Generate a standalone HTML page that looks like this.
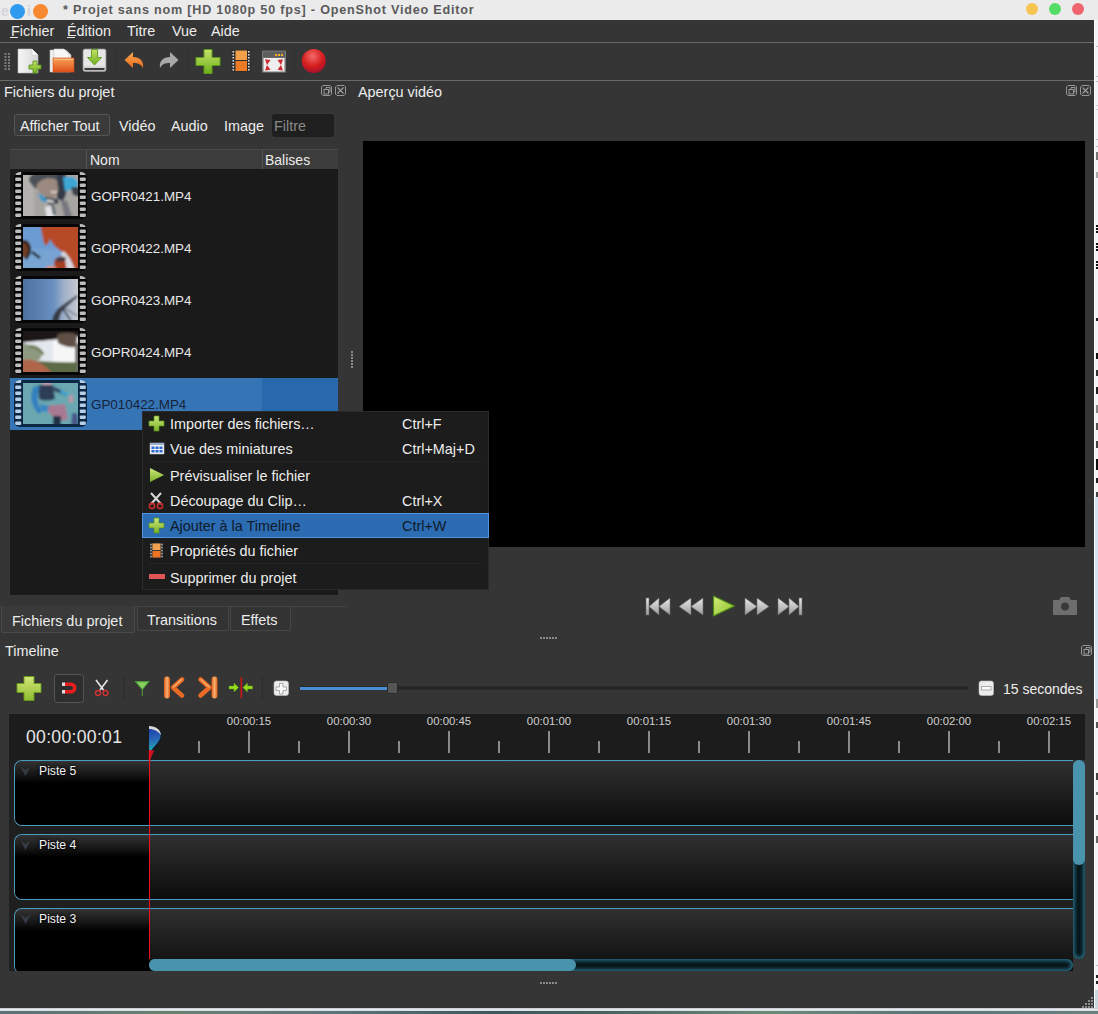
<!DOCTYPE html>
<html><head><meta charset="utf-8">
<style>
*{box-sizing:border-box}
html,body{margin:0;padding:0}
body{width:1098px;height:1014px;position:relative;overflow:hidden;background:#353535;font-family:"Liberation Sans",sans-serif;color:#ededed;font-size:14.4px;-webkit-font-smoothing:antialiased}
.a{position:absolute}
.t{position:absolute;white-space:nowrap;line-height:1}
</style></head><body>
<!-- title bar -->
<div class="a" style="left:0;top:0;width:1098px;height:20px;background:#ebebec"></div>
<div class="t" style="left:-3px;top:4px;font-size:14px;font-weight:bold;color:#d6d6d8">le</div><div class="t" style="left:27px;top:4px;font-size:14px;font-weight:bold;color:#d6d6d8">i</div>
<div class="a" style="left:10px;top:3.7px;width:15px;height:15px;border-radius:50%;background:#2f9bf0"></div>
<div class="a" style="left:33px;top:3.7px;width:15px;height:15px;border-radius:50%;background:#f78a30"></div>
<div class="t" style="left:63px;top:4px;font-weight:bold;font-size:12.6px;letter-spacing:0.8px;color:#5a5a5a">* Projet sans nom [HD 1080p 50 fps] - OpenShot Video Editor</div>
<div class="a" style="left:1026px;top:3px;width:12px;height:12px;border-radius:50%;background:#f6c453"></div>
<div class="a" style="left:1049px;top:3px;width:12px;height:12px;border-radius:50%;background:#55dd66"></div>
<div class="a" style="left:1072px;top:3px;width:12px;height:12px;border-radius:50%;background:#f0646e"></div>

<!-- right strip other window -->
<div class="a" style="left:1094px;top:20px;width:4px;height:990px;background:#f4f4f6"></div>
<div class="a" style="left:1094px;top:497px;width:4px;height:203px;background:#d6e2ef"></div>
<div class="a" style="left:1094px;top:990px;width:4px;height:18px;background:#c9d6de"></div>
<div class="a" style="left:1094px;top:20px;width:1px;height:990px;background:#ffffff"></div>
<div class="a" style="left:1096px;top:46px;width:2px;height:1px;background:#bbb"></div>
<div class="a" style="left:1096px;top:76px;width:2px;height:1px;background:#bbb"></div>
<div class="a" style="left:1096px;top:81px;width:2px;height:1px;background:#bbb"></div>
<div class="a" style="left:1096px;top:105px;width:2px;height:1px;background:#ccc"></div>
<div class="a" style="left:1096px;top:109px;width:2px;height:1px;background:#ccc"></div>
<div class="a" style="left:1096px;top:139px;width:2px;height:1px;background:#bbb"></div>
<div class="a" style="left:1096px;top:146px;width:2px;height:1px;background:#bbb"></div>
<div class="a" style="left:1096px;top:152px;width:2px;height:8px;background:#777"></div>
<div class="a" style="left:1096px;top:172px;width:2px;height:6px;background:#aaa"></div>
<div class="a" style="left:1096px;top:225px;width:2px;height:2px;background:#111"></div>
<div class="a" style="left:1096px;top:228px;width:2px;height:2px;background:#111"></div>
<div class="a" style="left:1096px;top:231px;width:2px;height:2px;background:#111"></div>
<div class="a" style="left:1096px;top:243px;width:2px;height:2px;background:#111"></div>
<div class="a" style="left:1096px;top:246px;width:2px;height:2px;background:#111"></div>
<div class="a" style="left:1096px;top:249px;width:2px;height:2px;background:#111"></div>
<div class="a" style="left:1096px;top:261px;width:2px;height:2px;background:#111"></div>
<div class="a" style="left:1096px;top:264px;width:2px;height:2px;background:#111"></div>
<div class="a" style="left:1096px;top:267px;width:2px;height:2px;background:#111"></div>
<div class="a" style="left:1096px;top:318px;width:2px;height:3px;background:#222"></div>
<div class="a" style="left:1096px;top:353px;width:2px;height:6px;background:#111"></div>
<div class="a" style="left:1096px;top:370px;width:2px;height:6px;background:#333"></div>
<div class="a" style="left:1096px;top:387px;width:2px;height:7px;background:#222"></div>
<div class="a" style="left:1096px;top:405px;width:2px;height:8px;background:#888"></div>
<div class="a" style="left:1096px;top:423px;width:2px;height:7px;background:#555"></div>
<div class="a" style="left:1096px;top:441px;width:2px;height:7px;background:#444"></div>
<div class="a" style="left:1096px;top:459px;width:2px;height:11px;background:#111"></div>
<div class="a" style="left:1096px;top:478px;width:2px;height:5px;background:#222"></div>
<div class="a" style="left:1096px;top:492px;width:2px;height:5px;background:#444"></div>
<div class="a" style="left:1096px;top:699px;width:2px;height:9px;background:#999"></div>
<div class="a" style="left:1096px;top:722px;width:2px;height:6px;background:#555"></div>
<div class="a" style="left:1096px;top:773px;width:2px;height:7px;background:#444"></div>
<div class="a" style="left:1096px;top:792px;width:2px;height:3px;background:#666"></div>
<div class="a" style="left:1096px;top:815px;width:2px;height:5px;background:#555"></div>
<div class="a" style="left:1096px;top:836px;width:2px;height:7px;background:#666"></div>
<div class="a" style="left:1096px;top:965px;width:2px;height:1px;background:#bbb"></div>
<div class="a" style="left:1096px;top:975px;width:2px;height:3px;background:#222"></div>
<div class="a" style="left:1096px;top:981px;width:2px;height:3px;background:#222"></div>
<!-- bottom desktop strip -->
<div class="a" style="left:0;top:1008px;width:1098px;height:3px;background:linear-gradient(180deg,#b8bcc0,#e6eaee 40%,#d8dde2)"></div>
<div class="a" style="left:0;top:1011px;width:1098px;height:3px;background:linear-gradient(90deg,#5c7078,#6a8070 15%,#5e747c 30%,#3e5860 45%,#4a6260 55%,#6a8a78 70%,#5a7478 85%,#6a8080)"></div>

<!-- menu -->
<div class="t" style="left:11px;top:24px">Fichier</div>
<div class="t" style="left:67px;top:24px">Édition</div>
<div class="t" style="left:127px;top:24px">Titre</div>
<div class="t" style="left:172px;top:24px">Vue</div>
<div class="t" style="left:211px;top:24px">Aide</div>
<div class="a" style="left:10px;top:37px;width:8px;height:1px;background:#e6e6e6"></div>
<div class="a" style="left:67px;top:37px;width:8px;height:1px;background:#e6e6e6"></div>
<div class="a" style="left:0;top:42px;width:1094px;height:1px;background:#6a6a6a"></div>
<div class="a" style="left:0;top:80px;width:1094px;height:1px;background:#6a6a6a"></div>


<!-- toolbar -->
<svg class="a" style="left:0;top:44px" width="340" height="36" viewBox="0 44 340 36">
<defs>
<linearGradient id="gp" x1="0" y1="0" x2="0" y2="1"><stop offset="0" stop-color="#c4e36a"/><stop offset="1" stop-color="#6fae1c"/></linearGradient>
<linearGradient id="pg" x1="0" y1="0" x2="1" y2="0"><stop offset="0" stop-color="#f6f6f6"/><stop offset="1" stop-color="#d8d8d8"/></linearGradient>
<linearGradient id="og" x1="0" y1="0" x2="0" y2="1"><stop offset="0" stop-color="#f7a35a"/><stop offset="1" stop-color="#e0501a"/></linearGradient>
<linearGradient id="orv" x1="0" y1="0" x2="0" y2="1"><stop offset="0" stop-color="#f4a84e"/><stop offset="1" stop-color="#ec6a1c"/></linearGradient>
<radialGradient id="rc" cx="0.45" cy="0.3" r="0.7"><stop offset="0" stop-color="#f46a6a"/><stop offset="0.6" stop-color="#d61e1e"/><stop offset="1" stop-color="#a8102a"/></radialGradient>
</defs>
<g fill="#7a7a7a">
<rect x="4.5" y="53" width="2" height="2"/><rect x="8" y="53" width="2" height="2"/>
<rect x="4.5" y="56" width="2" height="2"/><rect x="8" y="56" width="2" height="2"/>
<rect x="4.5" y="59" width="2" height="2"/><rect x="8" y="59" width="2" height="2"/>
<rect x="4.5" y="62" width="2" height="2"/><rect x="8" y="62" width="2" height="2"/>
<rect x="4.5" y="65" width="2" height="2"/><rect x="8" y="65" width="2" height="2"/>
<rect x="4.5" y="68" width="2" height="2"/><rect x="8" y="68" width="2" height="2"/>
</g>
<!-- new -->
<path d="M18 49 H32 L38 55 V73 H18 Z" fill="url(#pg)" stroke="#bdbdbd" stroke-width="0.6"/>
<path d="M32 49 V55 H38" fill="#fff" stroke="#c8c8c8" stroke-width="0.6"/>
<path d="M33 61 h4 v4 h4 v4 h-4 v4 h-4 v-4 h-4 v-4 h4 z" fill="url(#gp)" stroke="#4f8a14" stroke-width="0.8"/>
<!-- open -->
<path d="M50 50 H66 L71 55 V72 H50 Z" fill="#efefef" stroke="#c0c0c0" stroke-width="0.6"/>
<path d="M54 49 H64 L69 54 V60 H54 Z" fill="#f7f7f7" stroke="#c8c8c8" stroke-width="0.6"/>
<rect x="53" y="58" width="21" height="14" fill="url(#og)" stroke="#d44a14" stroke-width="0.6"/>
<rect x="54" y="59" width="19" height="1" fill="#f9c890" opacity="0.8"/>
<!-- save -->
<rect x="83" y="49" width="23" height="22.5" rx="2" fill="#d6d6d6" stroke="#9a9a9a" stroke-width="0.7"/>
<rect x="84" y="50" width="21" height="16" fill="#e6e6e6"/>
<rect x="84.5" y="68" width="20" height="2" fill="#3c3c3c"/>
<rect x="84.5" y="70" width="20" height="1" fill="#bdbdbd"/>
<path d="M91.5 49.5 h6 v8 h4 l-7 7.5 l-7 -7.5 h4 z" fill="url(#gp)" stroke="#5c9a1a" stroke-width="0.9"/>
<rect x="116" y="48" width="1" height="26" fill="#303030"/>
<!-- undo -->
<path d="M124.5 60 L133 52 V57 C140 57 144 61 143 68 C141 64 138 63 133 63 V68 Z" fill="url(#orv)"/>
<!-- redo -->
<path d="M178.5 60 L170 52 V57 C163 57 159 61 160 68 C162 64 165 63 170 63 V68 Z" fill="#a8a8a8"/>
<rect x="188" y="48" width="1" height="26" fill="#303030"/>
<!-- add -->
<path d="M204 49.5 h8 v8 h8 v8 h-8 v8 h-8 v-8 h-8 v-8 h8 z" fill="url(#gp)" stroke="#5d9c18" stroke-width="1"/>
<!-- film -->
<rect x="231.5" y="49.5" width="19" height="22.5" fill="#2c2c2c"/>
<g fill="#dcdcdc"><rect x="232.5" y="51" width="1.6" height="1.6"/><rect x="232.5" y="54" width="1.6" height="1.6"/><rect x="232.5" y="57" width="1.6" height="1.6"/><rect x="232.5" y="60" width="1.6" height="1.6"/><rect x="232.5" y="63" width="1.6" height="1.6"/><rect x="232.5" y="66" width="1.6" height="1.6"/><rect x="232.5" y="69" width="1.6" height="1.6"/>
<rect x="248" y="51" width="1.6" height="1.6"/><rect x="248" y="54" width="1.6" height="1.6"/><rect x="248" y="57" width="1.6" height="1.6"/><rect x="248" y="60" width="1.6" height="1.6"/><rect x="248" y="63" width="1.6" height="1.6"/><rect x="248" y="66" width="1.6" height="1.6"/><rect x="248" y="69" width="1.6" height="1.6"/></g>
<rect x="235.5" y="50.5" width="11.5" height="9.5" fill="#f0a048"/>
<rect x="235.5" y="61" width="11.5" height="10" fill="#ec7a24"/>
<!-- fullscreen -->
<rect x="262" y="50.6" width="24" height="22" fill="#7a7a7a"/>
<rect x="263" y="51.5" width="22" height="6" fill="#5e5e5e"/>
<g fill="#f2b01e"><rect x="275" y="54" width="2" height="2"/><rect x="278" y="54" width="2" height="2"/><rect x="281" y="54" width="2" height="2"/></g>
<rect x="263.5" y="58" width="21" height="13.5" fill="#eeeeee"/>
<g fill="#cc2a30"><path d="M265 59.3 L270.5 60 L267 65 Z"/><path d="M265 70.5 L270.5 69.8 L267 65 Z"/><path d="M283 59.3 L277.5 60 L281 65 Z"/><path d="M283 70.5 L277.5 69.8 L281 65 Z"/></g>
<rect x="294" y="48" width="1" height="26" fill="#303030"/>
<!-- record -->
<circle cx="313.8" cy="61" r="12" fill="url(#rc)"/>
</svg>

<!-- project files dock -->
<div class="t" style="left:4px;top:85px">Fichiers du projet</div>
<div class="a" style="left:14px;top:114px;width:96px;height:22px;border:1px solid #555;border-radius:3px;background:#3a3a3a"></div>
<div class="t" style="left:20px;top:119px">Afficher Tout</div>
<div class="t" style="left:119px;top:119px">Vidéo</div>
<div class="t" style="left:171px;top:119px">Audio</div>
<div class="t" style="left:224px;top:119px">Image</div>
<div class="a" style="left:272px;top:114px;width:62px;height:23px;border-radius:3px;background:#1f1f1f"></div>
<div class="t" style="left:274px;top:119px;color:#8a8a8a">Filtre</div>

<div class="a" style="left:10px;top:149px;width:328px;height:446px;background:#1a1a1a"></div>
<div class="a" style="left:10px;top:149px;width:328px;height:20px;background:#3c3c3c;border-top:1px solid #4a4a4a"></div>
<div class="a" style="left:86px;top:149px;width:1px;height:20px;background:#555"></div>
<div class="a" style="left:262px;top:149px;width:1px;height:20px;background:#555"></div>
<div class="t" style="left:90px;top:153px;font-size:14px">Nom</div>
<div class="t" style="left:265px;top:153px;font-size:14px">Balises</div>

<div class="a" style="left:10px;top:378px;width:328px;height:52px;background:#3675b5"></div>
<div class="a" style="left:262px;top:378px;width:76px;height:52px;background:#2868ad"></div>
<svg class="a" style="left:14px;top:172px" width="73" height="47" viewBox="0 0 73 47">
<defs><clipPath id="fc0"><rect x="0" y="0" width="73" height="47" rx="6"/></clipPath><clipPath id="ic0"><rect x="9" y="3" width="55" height="41"/></clipPath><filter id="bl0" x="-20%" y="-20%" width="140%" height="140%"><feGaussianBlur stdDeviation="0.9"/></filter></defs>
<g clip-path="url(#fc0)"><rect width="73" height="47" fill="#060606"/><rect x="1.2" y="-0.5" width="6" height="3.4" rx="1" fill="#bdbdbd"/><rect x="65.8" y="-0.5" width="6" height="3.4" rx="1" fill="#bdbdbd"/><rect x="1.2" y="5.5" width="6" height="3.4" rx="1" fill="#bdbdbd"/><rect x="65.8" y="5.5" width="6" height="3.4" rx="1" fill="#bdbdbd"/><rect x="1.2" y="11.5" width="6" height="3.4" rx="1" fill="#bdbdbd"/><rect x="65.8" y="11.5" width="6" height="3.4" rx="1" fill="#bdbdbd"/><rect x="1.2" y="17.5" width="6" height="3.4" rx="1" fill="#bdbdbd"/><rect x="65.8" y="17.5" width="6" height="3.4" rx="1" fill="#bdbdbd"/><rect x="1.2" y="23.5" width="6" height="3.4" rx="1" fill="#bdbdbd"/><rect x="65.8" y="23.5" width="6" height="3.4" rx="1" fill="#bdbdbd"/><rect x="1.2" y="29.5" width="6" height="3.4" rx="1" fill="#bdbdbd"/><rect x="65.8" y="29.5" width="6" height="3.4" rx="1" fill="#bdbdbd"/><rect x="1.2" y="35.5" width="6" height="3.4" rx="1" fill="#bdbdbd"/><rect x="65.8" y="35.5" width="6" height="3.4" rx="1" fill="#bdbdbd"/><rect x="1.2" y="41.5" width="6" height="3.4" rx="1" fill="#bdbdbd"/><rect x="65.8" y="41.5" width="6" height="3.4" rx="1" fill="#bdbdbd"/></g>
<g clip-path="url(#ic0)"><g transform="translate(9 3)" filter="url(#bl0)"><rect x="-3" y="-3" width="61" height="47" fill="#a7a5a2"/>
<rect x="-3" y="-3" width="14" height="47" fill="#b4b2ae"/>
<path d="M6 6 C6 -2 14 -3 22 -2 L36 -2 L38 6 C30 4 20 6 12 14 Z" fill="#4c4f56"/>
<path d="M34 -2 L42 -2 C46 6 44 20 40 26 L34 24 Z" fill="#343a48"/>
<path d="M13 12 C16 4 24 2 32 4 C36 10 36 18 32 22 C26 24 18 22 13 12 Z" fill="#9c8a80"/>
<path d="M28 16 C30 18 32 18 34 16" stroke="#f0e8e0" stroke-width="1.2" fill="none"/>
<path d="M40 2 L50 2 L56 8 L52 14 L42 16 Z" fill="#3ca8d6"/>
<path d="M48 12 L58 12 L58 22 L50 20 Z" fill="#3c414c"/>
<path d="M15 18 L22 22 L26 28 L18 26 Z" fill="#3a98c8"/>
<path d="M22 22 L34 24 L36 28 L26 30 Z" fill="#2c3444"/>
<path d="M24 24 L32 26 L30 28 L24 27 Z" fill="#d8d4d0"/>
<path d="M38 26 L44 26 L50 44 L42 44 Z" fill="#777780"/>
<path d="M22 32 L30 30 L32 44 L24 44 Z" fill="#e2e2e6"/>
<path d="M28 30 L31 30 L33 40 L30 40 Z" fill="#5a6a6a"/></g></g>
</svg>
<div class="t" style="left:91px;top:190px;font-size:13.4px;color:#e8e8e8">GOPR0421.MP4</div>
<svg class="a" style="left:14px;top:224px" width="73" height="47" viewBox="0 0 73 47">
<defs><clipPath id="fc1"><rect x="0" y="0" width="73" height="47" rx="6"/></clipPath><clipPath id="ic1"><rect x="9" y="3" width="55" height="41"/></clipPath><filter id="bl1" x="-20%" y="-20%" width="140%" height="140%"><feGaussianBlur stdDeviation="0.9"/></filter></defs>
<g clip-path="url(#fc1)"><rect width="73" height="47" fill="#060606"/><rect x="1.2" y="-0.5" width="6" height="3.4" rx="1" fill="#bdbdbd"/><rect x="65.8" y="-0.5" width="6" height="3.4" rx="1" fill="#bdbdbd"/><rect x="1.2" y="5.5" width="6" height="3.4" rx="1" fill="#bdbdbd"/><rect x="65.8" y="5.5" width="6" height="3.4" rx="1" fill="#bdbdbd"/><rect x="1.2" y="11.5" width="6" height="3.4" rx="1" fill="#bdbdbd"/><rect x="65.8" y="11.5" width="6" height="3.4" rx="1" fill="#bdbdbd"/><rect x="1.2" y="17.5" width="6" height="3.4" rx="1" fill="#bdbdbd"/><rect x="65.8" y="17.5" width="6" height="3.4" rx="1" fill="#bdbdbd"/><rect x="1.2" y="23.5" width="6" height="3.4" rx="1" fill="#bdbdbd"/><rect x="65.8" y="23.5" width="6" height="3.4" rx="1" fill="#bdbdbd"/><rect x="1.2" y="29.5" width="6" height="3.4" rx="1" fill="#bdbdbd"/><rect x="65.8" y="29.5" width="6" height="3.4" rx="1" fill="#bdbdbd"/><rect x="1.2" y="35.5" width="6" height="3.4" rx="1" fill="#bdbdbd"/><rect x="65.8" y="35.5" width="6" height="3.4" rx="1" fill="#bdbdbd"/><rect x="1.2" y="41.5" width="6" height="3.4" rx="1" fill="#bdbdbd"/><rect x="65.8" y="41.5" width="6" height="3.4" rx="1" fill="#bdbdbd"/></g>
<g clip-path="url(#ic1)"><g transform="translate(9 3)" filter="url(#bl1)"><rect x="-3" y="-3" width="61" height="47" fill="#6b9bd2"/>
<rect x="-3" y="22" width="40" height="22" fill="#78a4d4"/>
<path d="M17 -3 H58 V44 H48 C46 36 44 30 40 26 C36 22 32 20 30 17 C28 14 27 12 27 11 C26 18 22 20 21 16 C20 12 19 6 17 -3 Z" fill="#b64a28"/>
<path d="M40 24 C46 28 50 36 52 44 H44 C42 38 40 32 38 26 Z" fill="#d6d8e0"/>
<path d="M31 34 C34 29 40 28 42 32 L44 44 H32 Z" fill="#a84024"/>
<path d="M33 31 L43 30 L42 34 L34 35 Z" fill="#3a3a3e"/>
<ellipse cx="2" cy="22" rx="6" ry="9" fill="#6e3c24"/>
<path d="M-3 14 C6 13 10 24 3 32" fill="none" stroke="#151515" stroke-width="2.4"/>
<path d="M9 25 L17 31" stroke="#151515" stroke-width="2.4"/>
<ellipse cx="28" cy="42" rx="6" ry="3" fill="#e09070"/></g></g>
</svg>
<div class="t" style="left:91px;top:242px;font-size:13.4px;color:#e8e8e8">GOPR0422.MP4</div>
<svg class="a" style="left:14px;top:276px" width="73" height="47" viewBox="0 0 73 47">
<defs><clipPath id="fc2"><rect x="0" y="0" width="73" height="47" rx="6"/></clipPath><clipPath id="ic2"><rect x="9" y="3" width="55" height="41"/></clipPath><filter id="bl2" x="-20%" y="-20%" width="140%" height="140%"><feGaussianBlur stdDeviation="0.9"/></filter></defs>
<g clip-path="url(#fc2)"><rect width="73" height="47" fill="#060606"/><rect x="1.2" y="-0.5" width="6" height="3.4" rx="1" fill="#bdbdbd"/><rect x="65.8" y="-0.5" width="6" height="3.4" rx="1" fill="#bdbdbd"/><rect x="1.2" y="5.5" width="6" height="3.4" rx="1" fill="#bdbdbd"/><rect x="65.8" y="5.5" width="6" height="3.4" rx="1" fill="#bdbdbd"/><rect x="1.2" y="11.5" width="6" height="3.4" rx="1" fill="#bdbdbd"/><rect x="65.8" y="11.5" width="6" height="3.4" rx="1" fill="#bdbdbd"/><rect x="1.2" y="17.5" width="6" height="3.4" rx="1" fill="#bdbdbd"/><rect x="65.8" y="17.5" width="6" height="3.4" rx="1" fill="#bdbdbd"/><rect x="1.2" y="23.5" width="6" height="3.4" rx="1" fill="#bdbdbd"/><rect x="65.8" y="23.5" width="6" height="3.4" rx="1" fill="#bdbdbd"/><rect x="1.2" y="29.5" width="6" height="3.4" rx="1" fill="#bdbdbd"/><rect x="65.8" y="29.5" width="6" height="3.4" rx="1" fill="#bdbdbd"/><rect x="1.2" y="35.5" width="6" height="3.4" rx="1" fill="#bdbdbd"/><rect x="65.8" y="35.5" width="6" height="3.4" rx="1" fill="#bdbdbd"/><rect x="1.2" y="41.5" width="6" height="3.4" rx="1" fill="#bdbdbd"/><rect x="65.8" y="41.5" width="6" height="3.4" rx="1" fill="#bdbdbd"/></g>
<g clip-path="url(#ic2)"><g transform="translate(9 3)" filter="url(#bl2)"><defs><linearGradient id="sk3" x1="0" y1="0" x2="1" y2="0"><stop offset="0" stop-color="#4a6e9e"/><stop offset="0.55" stop-color="#6890c0"/><stop offset="0.72" stop-color="#9fb0c8"/><stop offset="1" stop-color="#cfcfd4"/></linearGradient></defs>
<rect x="-3" y="-3" width="61" height="47" fill="url(#sk3)"/>
<path d="M29 44 C29 38 32 32 37 28 L54 16 L55 17.5 L41 30 C38 33 36 38 36 44 Z" fill="#383a44"/>
<path d="M40 30 L48 42" stroke="#30323a" stroke-width="1.4"/>
<path d="M41 29 L55 37" stroke="#50525a" stroke-width="1"/></g></g>
</svg>
<div class="t" style="left:91px;top:294px;font-size:13.4px;color:#e8e8e8">GOPR0423.MP4</div>
<svg class="a" style="left:14px;top:328px" width="73" height="47" viewBox="0 0 73 47">
<defs><clipPath id="fc3"><rect x="0" y="0" width="73" height="47" rx="6"/></clipPath><clipPath id="ic3"><rect x="9" y="3" width="55" height="41"/></clipPath><filter id="bl3" x="-20%" y="-20%" width="140%" height="140%"><feGaussianBlur stdDeviation="0.9"/></filter></defs>
<g clip-path="url(#fc3)"><rect width="73" height="47" fill="#060606"/><rect x="1.2" y="-0.5" width="6" height="3.4" rx="1" fill="#bdbdbd"/><rect x="65.8" y="-0.5" width="6" height="3.4" rx="1" fill="#bdbdbd"/><rect x="1.2" y="5.5" width="6" height="3.4" rx="1" fill="#bdbdbd"/><rect x="65.8" y="5.5" width="6" height="3.4" rx="1" fill="#bdbdbd"/><rect x="1.2" y="11.5" width="6" height="3.4" rx="1" fill="#bdbdbd"/><rect x="65.8" y="11.5" width="6" height="3.4" rx="1" fill="#bdbdbd"/><rect x="1.2" y="17.5" width="6" height="3.4" rx="1" fill="#bdbdbd"/><rect x="65.8" y="17.5" width="6" height="3.4" rx="1" fill="#bdbdbd"/><rect x="1.2" y="23.5" width="6" height="3.4" rx="1" fill="#bdbdbd"/><rect x="65.8" y="23.5" width="6" height="3.4" rx="1" fill="#bdbdbd"/><rect x="1.2" y="29.5" width="6" height="3.4" rx="1" fill="#bdbdbd"/><rect x="65.8" y="29.5" width="6" height="3.4" rx="1" fill="#bdbdbd"/><rect x="1.2" y="35.5" width="6" height="3.4" rx="1" fill="#bdbdbd"/><rect x="65.8" y="35.5" width="6" height="3.4" rx="1" fill="#bdbdbd"/><rect x="1.2" y="41.5" width="6" height="3.4" rx="1" fill="#bdbdbd"/><rect x="65.8" y="41.5" width="6" height="3.4" rx="1" fill="#bdbdbd"/></g>
<g clip-path="url(#ic3)"><g transform="translate(9 3)" filter="url(#bl3)"><rect x="-3" y="-3" width="61" height="47" fill="#e4e8ee"/>
<rect x="30" y="10" width="28" height="22" fill="#f6f6f6"/>
<path d="M-3 -3 H58 V6 C50 5 40 6 34 8 C25 10 15 9 -3 12 Z" fill="#1c1816"/>
<path d="M34 4 C38 1 50 1 54 4 L53 16 C46 17 40 15 35 12 Z" fill="#5e5044"/>
<rect x="52" y="12" width="6" height="32" fill="#707070"/>
<path d="M-3 12 C2 12 10 14 16 20 C20 26 18 30 12 30 L-3 30 Z" fill="#8e9a80"/>
<path d="M6 16 C10 14 18 18 20 24" fill="none" stroke="#6a7a50" stroke-width="3"/>
<path d="M10 30 C25 30 40 32 54 31 V44 H10 Z" fill="#5c6a44"/>
<path d="M-3 44 V30 C6 26 20 30 30 44 Z" fill="#b0654c"/></g></g>
</svg>
<div class="t" style="left:91px;top:346px;font-size:13.4px;color:#e8e8e8">GOPR0424.MP4</div>
<svg class="a" style="left:14px;top:380px" width="73" height="47" viewBox="0 0 73 47">
<defs><clipPath id="fc4"><rect x="0" y="0" width="73" height="47" rx="6"/></clipPath><clipPath id="ic4"><rect x="9" y="3" width="55" height="41"/></clipPath><filter id="bl4" x="-20%" y="-20%" width="140%" height="140%"><feGaussianBlur stdDeviation="0.9"/></filter></defs>
<g clip-path="url(#fc4)"><rect width="73" height="47" fill="#0c2744"/><rect x="1.2" y="-0.5" width="6" height="3.4" rx="1" fill="#b9cfe6"/><rect x="65.8" y="-0.5" width="6" height="3.4" rx="1" fill="#b9cfe6"/><rect x="1.2" y="5.5" width="6" height="3.4" rx="1" fill="#b9cfe6"/><rect x="65.8" y="5.5" width="6" height="3.4" rx="1" fill="#b9cfe6"/><rect x="1.2" y="11.5" width="6" height="3.4" rx="1" fill="#b9cfe6"/><rect x="65.8" y="11.5" width="6" height="3.4" rx="1" fill="#b9cfe6"/><rect x="1.2" y="17.5" width="6" height="3.4" rx="1" fill="#b9cfe6"/><rect x="65.8" y="17.5" width="6" height="3.4" rx="1" fill="#b9cfe6"/><rect x="1.2" y="23.5" width="6" height="3.4" rx="1" fill="#b9cfe6"/><rect x="65.8" y="23.5" width="6" height="3.4" rx="1" fill="#b9cfe6"/><rect x="1.2" y="29.5" width="6" height="3.4" rx="1" fill="#b9cfe6"/><rect x="65.8" y="29.5" width="6" height="3.4" rx="1" fill="#b9cfe6"/><rect x="1.2" y="35.5" width="6" height="3.4" rx="1" fill="#b9cfe6"/><rect x="65.8" y="35.5" width="6" height="3.4" rx="1" fill="#b9cfe6"/><rect x="1.2" y="41.5" width="6" height="3.4" rx="1" fill="#b9cfe6"/><rect x="65.8" y="41.5" width="6" height="3.4" rx="1" fill="#b9cfe6"/></g>
<g clip-path="url(#ic4)"><g transform="translate(9 3)" filter="url(#bl4)"><rect x="-3" y="-3" width="61" height="47" fill="#6ba7b0"/>
<ellipse cx="24" cy="0" rx="5" ry="4" fill="#c0a0b0"/>
<path d="M15 2 H30 L32 16 C26 18 20 18 16 16 Z" fill="#2f3e56"/>
<path d="M11 3 C6 12 8 24 16 31 L19 28 C14 22 13 12 17 4 Z" fill="#3080c0"/>
<path d="M30 3 L44 10 L43 13 L31 8 Z" fill="#334a66"/>
<path d="M38 7 L46 11 L44 13 L37 10 Z" fill="#40a8d8"/>
<ellipse cx="48" cy="16" rx="2.5" ry="4" fill="#b898a8"/>
<path d="M22 23 L42 21 L45 36 L38 38 C31 36 25 30 22 23 Z" fill="#a77a92"/>
<path d="M17 21 L26 23 L24 29 L18 28 Z" fill="#3a88c4"/>
<rect x="30" y="33" width="8" height="11" fill="#22304a"/>
<path d="M49 30 L54 30 L56 44 L48 44 Z" fill="#46588a"/></g></g>
</svg>
<div class="t" style="left:91px;top:398px;font-size:13.4px;color:#15243a">GP010422.MP4</div>
<!-- preview -->
<div class="t" style="left:358px;top:85px">Aperçu vidéo</div>
<div class="a" style="left:363px;top:141px;width:722px;height:406px;background:#000"></div>

<!-- tabs -->
<div class="t" style="left:5px;top:644px">Timeline</div>

<svg class="a" style="left:321px;top:85px" width="11" height="11" viewBox="0 0 11 11"><path d="M2 0.5 H9 L10.5 2 V9 L9 10.5 H2 L0.5 9 V2 Z" fill="none" stroke="#a0a0a0" stroke-width="0.9"/><rect x="3" y="4.5" width="4.5" height="4.5" fill="none" stroke="#a0a0a0" stroke-width="0.9"/><path d="M5 4.5 V2.5 H9 V7 H7.5" fill="none" stroke="#a0a0a0" stroke-width="0.9"/></svg>
<svg class="a" style="left:335px;top:85px" width="11" height="11" viewBox="0 0 11 11"><path d="M2 0.5 H9 L10.5 2 V9 L9 10.5 H2 L0.5 9 V2 Z" fill="none" stroke="#a0a0a0" stroke-width="0.9"/><path d="M2.5 2.5 L8.5 8.5 M8.5 2.5 L2.5 8.5" stroke="#a0a0a0" stroke-width="1.1"/></svg>
<svg class="a" style="left:1066px;top:85px" width="11" height="11" viewBox="0 0 11 11"><path d="M2 0.5 H9 L10.5 2 V9 L9 10.5 H2 L0.5 9 V2 Z" fill="none" stroke="#a0a0a0" stroke-width="0.9"/><rect x="3" y="4.5" width="4.5" height="4.5" fill="none" stroke="#a0a0a0" stroke-width="0.9"/><path d="M5 4.5 V2.5 H9 V7 H7.5" fill="none" stroke="#a0a0a0" stroke-width="0.9"/></svg>
<svg class="a" style="left:1080px;top:85px" width="11" height="11" viewBox="0 0 11 11"><path d="M2 0.5 H9 L10.5 2 V9 L9 10.5 H2 L0.5 9 V2 Z" fill="none" stroke="#a0a0a0" stroke-width="0.9"/><path d="M2.5 2.5 L8.5 8.5 M8.5 2.5 L2.5 8.5" stroke="#a0a0a0" stroke-width="1.1"/></svg>
<svg class="a" style="left:1081px;top:645px" width="11" height="11" viewBox="0 0 11 11"><path d="M2 0.5 H9 L10.5 2 V9 L9 10.5 H2 L0.5 9 V2 Z" fill="none" stroke="#a0a0a0" stroke-width="0.9"/><rect x="3" y="4.5" width="4.5" height="4.5" fill="none" stroke="#a0a0a0" stroke-width="0.9"/><path d="M5 4.5 V2.5 H9 V7 H7.5" fill="none" stroke="#a0a0a0" stroke-width="0.9"/></svg>
<div class="a" style="left:351px;top:351px;width:2px;height:2px;background:#8a8a8a"></div>
<div class="a" style="left:351px;top:354px;width:2px;height:2px;background:#8a8a8a"></div>
<div class="a" style="left:351px;top:357px;width:2px;height:2px;background:#8a8a8a"></div>
<div class="a" style="left:351px;top:360px;width:2px;height:2px;background:#8a8a8a"></div>
<div class="a" style="left:351px;top:363px;width:2px;height:2px;background:#8a8a8a"></div>
<div class="a" style="left:351px;top:366px;width:2px;height:2px;background:#8a8a8a"></div>
<div class="a" style="left:540px;top:637px;width:2px;height:2px;background:#8a8a8a"></div>
<div class="a" style="left:540px;top:982px;width:2px;height:2px;background:#8a8a8a"></div>
<div class="a" style="left:543px;top:637px;width:2px;height:2px;background:#8a8a8a"></div>
<div class="a" style="left:543px;top:982px;width:2px;height:2px;background:#8a8a8a"></div>
<div class="a" style="left:546px;top:637px;width:2px;height:2px;background:#8a8a8a"></div>
<div class="a" style="left:546px;top:982px;width:2px;height:2px;background:#8a8a8a"></div>
<div class="a" style="left:549px;top:637px;width:2px;height:2px;background:#8a8a8a"></div>
<div class="a" style="left:549px;top:982px;width:2px;height:2px;background:#8a8a8a"></div>
<div class="a" style="left:552px;top:637px;width:2px;height:2px;background:#8a8a8a"></div>
<div class="a" style="left:552px;top:982px;width:2px;height:2px;background:#8a8a8a"></div>
<div class="a" style="left:555px;top:637px;width:2px;height:2px;background:#8a8a8a"></div>
<div class="a" style="left:555px;top:982px;width:2px;height:2px;background:#8a8a8a"></div>
<div class="a" style="left:0;top:606px;width:347px;height:1px;background:#444"></div>
<div class="a" style="left:137px;top:607px;width:92px;height:24px;background:#333;border:1px solid #474747;border-top:0;border-radius:0 0 3px 3px"></div>
<div class="a" style="left:230px;top:607px;width:61px;height:24px;background:#333;border:1px solid #474747;border-top:0;border-radius:0 0 3px 3px"></div>
<div class="a" style="left:1px;top:606px;width:134px;height:27px;background:#3a3a3a;border:1px solid #4a4a4a;border-top:0;border-radius:0 0 3px 3px"></div>
<div class="t" style="left:12px;top:614px">Fichiers du projet</div>
<div class="t" style="left:147px;top:613px">Transitions</div>
<div class="t" style="left:241px;top:613px">Effets</div>
<svg class="a" style="left:640px;top:592px" width="170" height="28" viewBox="640 592 170 28">
<defs>
<linearGradient id="sg" x1="0" y1="0" x2="0" y2="1"><stop offset="0" stop-color="#e8e8e8"/><stop offset="1" stop-color="#9c9c9c"/></linearGradient>
<linearGradient id="pl" x1="0" y1="0" x2="1" y2="1"><stop offset="0" stop-color="#d6ec7a"/><stop offset="1" stop-color="#86c02a"/></linearGradient>
</defs>
<g fill="url(#sg)" stroke="#6a6a6a" stroke-width="0.6">
<rect x="646" y="598" width="3" height="17"/>
<path d="M649 606.5 L659 598 V615 Z"/><path d="M659 606.5 L670 598 V615 Z"/>
<path d="M679 606.5 L691 598 V615 Z"/><path d="M691 606.5 L703 598 V615 Z"/>
<path d="M745 598 L757 606.5 L745 615 Z"/><path d="M757 598 L769 606.5 L757 615 Z"/>
<path d="M778 598 L789 606.5 L778 615 Z"/><path d="M789 598 L799 606.5 L789 615 Z"/>
<rect x="799" y="598" width="3" height="17"/>
</g>
<path d="M713.5 596 L734.5 606 L713.5 616 Z" fill="url(#pl)" stroke="#4e8a14" stroke-width="1.2" stroke-linejoin="round"/>
</svg>
<svg class="a" style="left:1052px;top:596px" width="26" height="20" viewBox="0 0 26 20">
<path d="M2 4 H7 L9 1 H17 L19 4 H24 Q25 4 25 5 V18 Q25 19 24 19 H2 Q1 19 1 18 V5 Q1 4 2 4 Z" fill="#6e6e6e"/>
<circle cx="13" cy="10.5" r="4" fill="#3a3a3a"/>
</svg>
<!-- timeline -->
<div class="a" style="left:9px;top:714px;width:1064px;height:257px;background:#1f1f1f"></div>
<svg class="a" style="left:10px;top:670px" width="290" height="36" viewBox="10 670 290 36">
<defs>
<linearGradient id="gp3" x1="0" y1="0" x2="0" y2="1"><stop offset="0" stop-color="#d2e678"/><stop offset="1" stop-color="#8ebc2e"/></linearGradient>
<linearGradient id="orm" x1="0" y1="0" x2="1" y2="0"><stop offset="0" stop-color="#e05a14"/><stop offset="0.5" stop-color="#f6b070"/><stop offset="1" stop-color="#e05a14"/></linearGradient>
</defs>
<path d="M24 676.5 h10 v7 h7 v9 h-7 v8 h-10 v-8 h-7 v-9 h7 z" fill="url(#gp3)" stroke="#6a9a1c" stroke-width="0.9"/>
<rect x="54.5" y="674.5" width="29" height="28" rx="3" fill="#2e2e2e" stroke="#555" stroke-width="1"/>
<path d="M76.5 688 A5.5 5.5 0 0 0 71 682.5 H62.5 V686 H71 A2 2 0 0 1 71 690 H62.5 V693.5 H71 A5.5 5.5 0 0 0 76.5 688 Z" fill="#e81e1e"/>
<rect x="62" y="682.5" width="3" height="3.5" fill="#dcdcdc"/><rect x="62" y="690" width="3" height="3.5" fill="#dcdcdc"/>
<path d="M96 680 L103.5 690 M107.5 680 L100 690" stroke="#e6e6e6" stroke-width="1.6"/>
<circle cx="98" cy="693" r="2.5" fill="none" stroke="#d83030" stroke-width="1.3"/>
<circle cx="105.5" cy="693" r="2.5" fill="none" stroke="#d83030" stroke-width="1.3"/>
<rect x="123.5" y="676" width="1" height="24" fill="#2c2c2c"/>
<path d="M134.5 681 H150 L142.3 690.5 Z" fill="#4a9a38" /><path d="M136.8 682.3 H147.7 L142.3 688.8 Z" fill="#8ad060"/>
<rect x="141.8" y="690" width="1" height="6" fill="#5aa040"/>
<rect x="164" y="676.5" width="6" height="22" rx="3" fill="url(#orm)"/>
<path d="M182 679.5 L173 687.5 L182 695.5" fill="none" stroke="#e86a24" stroke-width="4.6" stroke-linecap="round" stroke-linejoin="round"/><path d="M181.5 679.5 L173.5 687" fill="none" stroke="#f8b070" stroke-width="1.5" stroke-linecap="round"/>
<rect x="211.5" y="676.5" width="6" height="22" rx="3" fill="url(#orm)"/>
<path d="M200.5 679.5 L209.5 687.5 L200.5 695.5" fill="none" stroke="#e86a24" stroke-width="4.6" stroke-linecap="round" stroke-linejoin="round"/><path d="M201 679.5 L209 687" fill="none" stroke="#f8b070" stroke-width="1.5" stroke-linecap="round"/>
<rect x="240.5" y="677" width="1.6" height="21" fill="#c81818"/>
<path d="M229 686 h5 v-3 l4.5 4.5 l-4.5 4.5 v-3 h-5 z" fill="#98dc1e" stroke="#5aa010" stroke-width="0.5"/>
<path d="M252.5 686 h-5 v-3 l-4.5 4.5 l4.5 4.5 v-3 h5 z" fill="#98dc1e" stroke="#5aa010" stroke-width="0.5"/>
<rect x="262" y="676" width="1" height="24" fill="#2c2c2c"/>
<rect x="274" y="681" width="14.5" height="14.5" rx="2.5" fill="#ececec" stroke="#bdbdbd" stroke-width="0.6"/>
<path d="M279.5 683.5 h3.5 v3.5 h3.5 v3.5 h-3.5 v3.5 h-3.5 v-3.5 h-3.5 v-3.5 h3.5 z" fill="#fafafa" stroke="#8e8e8e" stroke-width="0.7"/>
</svg>
<div class="a" style="left:299px;top:686px;width:669px;height:4px;background:#252525;border:1px solid #2a2a2a;border-radius:2px"></div>
<div class="a" style="left:300px;top:687px;width:88px;height:3px;background:#4a8fd6"></div>
<div class="a" style="left:387px;top:682px;width:11px;height:12px;background:#555;border:1px solid #2a2a2a;border-radius:2px"></div>
<svg class="a" style="left:978px;top:680px" width="17" height="17" viewBox="0 0 17 17"><rect x="1" y="1" width="14.5" height="14.5" rx="2.5" fill="#ececec" stroke="#bdbdbd" stroke-width="0.6"/><rect x="3.5" y="6.5" width="9.5" height="3.5" fill="#fafafa" stroke="#8e8e8e" stroke-width="0.7"/></svg>
<div class="t" style="left:1003px;top:682px;font-size:14px">15 secondes</div>
<div class="a" style="left:9px;top:714px;width:1076px;height:46px;background:#1c1c1c"></div>
<div class="t" style="left:26px;top:729px;font-size:17.6px;letter-spacing:0.3px;color:#e6e6e6">00:00:00:01</div>
<div class="t" style="left:219px;width:60px;text-align:center;top:716px;font-size:11.4px;color:#cfcfcf">00:00:15</div>
<div class="a" style="left:248px;top:731px;width:2px;height:22px;background:#8a8a8a"></div>
<div class="a" style="left:198px;top:741px;width:2px;height:12px;background:#8a8a8a"></div>
<div class="t" style="left:319px;width:60px;text-align:center;top:716px;font-size:11.4px;color:#cfcfcf">00:00:30</div>
<div class="a" style="left:348px;top:731px;width:2px;height:22px;background:#8a8a8a"></div>
<div class="a" style="left:298px;top:741px;width:2px;height:12px;background:#8a8a8a"></div>
<div class="t" style="left:419px;width:60px;text-align:center;top:716px;font-size:11.4px;color:#cfcfcf">00:00:45</div>
<div class="a" style="left:448px;top:731px;width:2px;height:22px;background:#8a8a8a"></div>
<div class="a" style="left:398px;top:741px;width:2px;height:12px;background:#8a8a8a"></div>
<div class="t" style="left:519px;width:60px;text-align:center;top:716px;font-size:11.4px;color:#cfcfcf">00:01:00</div>
<div class="a" style="left:548px;top:731px;width:2px;height:22px;background:#8a8a8a"></div>
<div class="a" style="left:498px;top:741px;width:2px;height:12px;background:#8a8a8a"></div>
<div class="t" style="left:619px;width:60px;text-align:center;top:716px;font-size:11.4px;color:#cfcfcf">00:01:15</div>
<div class="a" style="left:648px;top:731px;width:2px;height:22px;background:#8a8a8a"></div>
<div class="a" style="left:598px;top:741px;width:2px;height:12px;background:#8a8a8a"></div>
<div class="t" style="left:719px;width:60px;text-align:center;top:716px;font-size:11.4px;color:#cfcfcf">00:01:30</div>
<div class="a" style="left:748px;top:731px;width:2px;height:22px;background:#8a8a8a"></div>
<div class="a" style="left:698px;top:741px;width:2px;height:12px;background:#8a8a8a"></div>
<div class="t" style="left:819px;width:60px;text-align:center;top:716px;font-size:11.4px;color:#cfcfcf">00:01:45</div>
<div class="a" style="left:848px;top:731px;width:2px;height:22px;background:#8a8a8a"></div>
<div class="a" style="left:798px;top:741px;width:2px;height:12px;background:#8a8a8a"></div>
<div class="t" style="left:919px;width:60px;text-align:center;top:716px;font-size:11.4px;color:#cfcfcf">00:02:00</div>
<div class="a" style="left:948px;top:731px;width:2px;height:22px;background:#8a8a8a"></div>
<div class="a" style="left:898px;top:741px;width:2px;height:12px;background:#8a8a8a"></div>
<div class="t" style="left:1019px;width:60px;text-align:center;top:716px;font-size:11.4px;color:#cfcfcf">00:02:15</div>
<div class="a" style="left:1048px;top:731px;width:2px;height:22px;background:#8a8a8a"></div>
<div class="a" style="left:998px;top:741px;width:2px;height:12px;background:#8a8a8a"></div>

<div class="a" style="left:9px;top:760px;width:1076px;height:211px;overflow:hidden">
<div class="a" style="left:5px;top:0px;width:1059px;height:66px;border:1px solid #4a9ec2;border-right:0;border-radius:8px 0 0 8px;background:linear-gradient(180deg,#303030,#0c0c0c);overflow:hidden">
<div class="a" style="left:0;top:0;width:135px;height:66px;background:linear-gradient(180deg,#333 0,#151515 14px,#000 22px)"></div>
<svg class="a" style="left:5px;top:5px" width="11" height="11" viewBox="0 0 11 11"><path d="M0.5 0.5 L5.5 10 L10.5 0.5 L5.5 4 Z" fill="#353c46"/></svg>
<div class="t" style="left:24px;top:4px;font-size:12.2px;color:#f4f4f4;text-shadow:0 0 4px #000,0 0 2px #000">Piste 5</div>
</div>
<div class="a" style="left:5px;top:74px;width:1059px;height:66px;border:1px solid #4a9ec2;border-right:0;border-radius:8px 0 0 8px;background:linear-gradient(180deg,#303030,#0c0c0c);overflow:hidden">
<div class="a" style="left:0;top:0;width:135px;height:66px;background:linear-gradient(180deg,#333 0,#151515 14px,#000 22px)"></div>
<svg class="a" style="left:5px;top:5px" width="11" height="11" viewBox="0 0 11 11"><path d="M0.5 0.5 L5.5 10 L10.5 0.5 L5.5 4 Z" fill="#353c46"/></svg>
<div class="t" style="left:24px;top:4px;font-size:12.2px;color:#f4f4f4;text-shadow:0 0 4px #000,0 0 2px #000">Piste 4</div>
</div>
<div class="a" style="left:5px;top:148px;width:1059px;height:66px;border:1px solid #4a9ec2;border-right:0;border-radius:8px 0 0 8px;background:linear-gradient(180deg,#303030,#0c0c0c);overflow:hidden">
<div class="a" style="left:0;top:0;width:135px;height:66px;background:linear-gradient(180deg,#333 0,#151515 14px,#000 22px)"></div>
<svg class="a" style="left:5px;top:5px" width="11" height="11" viewBox="0 0 11 11"><path d="M0.5 0.5 L5.5 10 L10.5 0.5 L5.5 4 Z" fill="#353c46"/></svg>
<div class="t" style="left:24px;top:4px;font-size:12.2px;color:#f4f4f4;text-shadow:0 0 4px #000,0 0 2px #000">Piste 3</div>
</div>
<div class="a" style="left:1064px;top:0;width:12px;height:199px;border-radius:6px;background:#071216;box-shadow:inset 0 0 4px 1.5px #2a7a94"></div>
<div class="a" style="left:1064px;top:0;width:12px;height:105px;border-radius:6px;background:#4a93ad"></div>
<div class="a" style="left:140px;top:199px;width:924px;height:12px;border-radius:6px;background:#071216;box-shadow:inset 0 0 4px 1.5px #2a7a94"></div>
<div class="a" style="left:140px;top:199px;width:427px;height:12px;border-radius:6px;background:#4a93ad"></div>
<div class="a" style="left:140px;top:195px;width:0;height:16px"></div>
<div class="a" style="left:139.8px;top:0;width:1.6px;height:199px;background:#f0101e"></div>
</div>
<svg class="a" style="left:146px;top:724px" width="20" height="38" viewBox="0 0 20 38">
<defs><linearGradient id="ph" x1="0.2" y1="0" x2="0.3" y2="1"><stop offset="0" stop-color="#1838a8"/><stop offset="0.5" stop-color="#2a68b8"/><stop offset="0.85" stop-color="#22a8b0"/></linearGradient></defs>
<path d="M3 2 C10 2 15.5 6 15.5 12 C15.5 18 9.5 22 5.5 30 L3 36 Z" fill="#0a1a30"/>
<path d="M3 2.5 C9.5 2.5 14.5 6 14.5 12 C14.5 17 9 21 5 27 L3 30 Z" fill="url(#ph)"/>
<path d="M3 2 C10 2 15 6 15 11.5 C13 7.5 8 5 3 5 Z" fill="#d8d8d8"/>
<path d="M3 26 L8.5 26.5 C7 29.5 5 33 4 36 L3 36 Z" fill="#c81020"/>
<rect x="2.8" y="26" width="1.6" height="12" fill="#f0101e"/>
</svg>
<div class="a" style="left:1091px;top:997px;width:2px;height:2px;background:#8a8a8a"></div>
<div class="a" style="left:1088px;top:1000px;width:2px;height:2px;background:#8a8a8a"></div>
<div class="a" style="left:1091px;top:1000px;width:2px;height:2px;background:#8a8a8a"></div>
<div class="a" style="left:1085px;top:1003px;width:2px;height:2px;background:#8a8a8a"></div>
<div class="a" style="left:1088px;top:1003px;width:2px;height:2px;background:#8a8a8a"></div>
<div class="a" style="left:1091px;top:1003px;width:2px;height:2px;background:#8a8a8a"></div>
<div class="a" style="left:1082px;top:1006px;width:2px;height:2px;background:#8a8a8a"></div>
<div class="a" style="left:1085px;top:1006px;width:2px;height:2px;background:#8a8a8a"></div>
<div class="a" style="left:1088px;top:1006px;width:2px;height:2px;background:#8a8a8a"></div>
<div class="a" style="left:1091px;top:1006px;width:2px;height:2px;background:#8a8a8a"></div>
<!-- context menu -->
<div class="a" style="left:142px;top:411px;width:347px;height:179px;background:#1c1c1c;border:1px solid #2a2a2a"></div>
<div class="a" style="left:149px;top:461px;width:333px;height:1px;background:#252525"></div>
<div class="a" style="left:149px;top:563px;width:333px;height:1px;background:#252525"></div>
<div class="a" style="left:142px;top:513px;width:347px;height:25px;background:#2b6cb3;border:1px solid #4f95e0"></div>
<svg class="a" style="left:142px;top:411px" width="30" height="179" viewBox="0 0 30 179">
<defs><linearGradient id="gp2" x1="0" y1="0" x2="0" y2="1"><stop offset="0" stop-color="#cde67a"/><stop offset="1" stop-color="#7ab22a"/></linearGradient></defs>
<path d="M12 5 h5 v5 h5 v5 h-5 v5 h-5 v-5 h-5 v-5 h5 z" fill="url(#gp2)" stroke="#5a921a" stroke-width="0.7"/>
<rect x="8" y="32" width="14" height="11" fill="#f2f2f2" stroke="#c8c8c8" stroke-width="0.5"/>
<rect x="8" y="32" width="14" height="2" fill="#9ab0d0"/>
<g fill="#2a6ad0"><rect x="9.5" y="35.5" width="3" height="2.5"/><rect x="13.5" y="35.5" width="3" height="2.5"/><rect x="17.5" y="35.5" width="3" height="2.5"/><rect x="9.5" y="39" width="3" height="2.5"/><rect x="13.5" y="39" width="3" height="2.5"/><rect x="17.5" y="39" width="3" height="2.5"/></g>
<path d="M8 57 L22 64 L8 71 Z" fill="url(#gp2)"/>
<path d="M9 82 L19 93 M19 82 L9 93" stroke="#d8d8d8" stroke-width="2"/>
<circle cx="10" cy="95" r="2.6" fill="none" stroke="#c82a2a" stroke-width="1.6"/>
<circle cx="18" cy="95" r="2.6" fill="none" stroke="#c82a2a" stroke-width="1.6"/>
<path d="M12 107 h5 v5 h5 v5 h-5 v5 h-5 v-5 h-5 v-5 h5 z" fill="url(#gp2)" stroke="#5a921a" stroke-width="0.7"/>
<rect x="8" y="132" width="13" height="15" fill="#3a3a3a"/>
<g fill="#e6e6e6"><rect x="8.5" y="133" width="1" height="1.2"/><rect x="8.5" y="136" width="1" height="1.2"/><rect x="8.5" y="139" width="1" height="1.2"/><rect x="8.5" y="142" width="1" height="1.2"/><rect x="8.5" y="145" width="1" height="1.2"/><rect x="19.5" y="133" width="1" height="1.2"/><rect x="19.5" y="136" width="1" height="1.2"/><rect x="19.5" y="139" width="1" height="1.2"/><rect x="19.5" y="142" width="1" height="1.2"/><rect x="19.5" y="145" width="1" height="1.2"/></g>
<rect x="10.5" y="132.5" width="8" height="6.5" fill="#f0a050"/>
<rect x="10.5" y="140" width="8" height="6.5" fill="#ec7424"/>
<rect x="7" y="163" width="16" height="5" fill="#e05555"/>
</svg>
<div class="t" style="left:170px;top:417px">Importer des fichiers…</div>
<div class="t" style="left:170px;top:442px">Vue des miniatures</div>
<div class="t" style="left:170px;top:469px">Prévisualiser le fichier</div>
<div class="t" style="left:170px;top:494px">Découpage du Clip…</div>
<div class="t" style="left:170px;top:519px;color:#101a28">Ajouter à la Timeline</div>
<div class="t" style="left:170px;top:544px">Propriétés du fichier</div>
<div class="t" style="left:170px;top:571px">Supprimer du projet</div>
<div class="t" style="left:402px;top:417px">Ctrl+F</div>
<div class="t" style="left:402px;top:442px">Ctrl+Maj+D</div>
<div class="t" style="left:402px;top:494px">Ctrl+X</div>
<div class="t" style="left:402px;top:519px;color:#101a28">Ctrl+W</div>
</body></html>
